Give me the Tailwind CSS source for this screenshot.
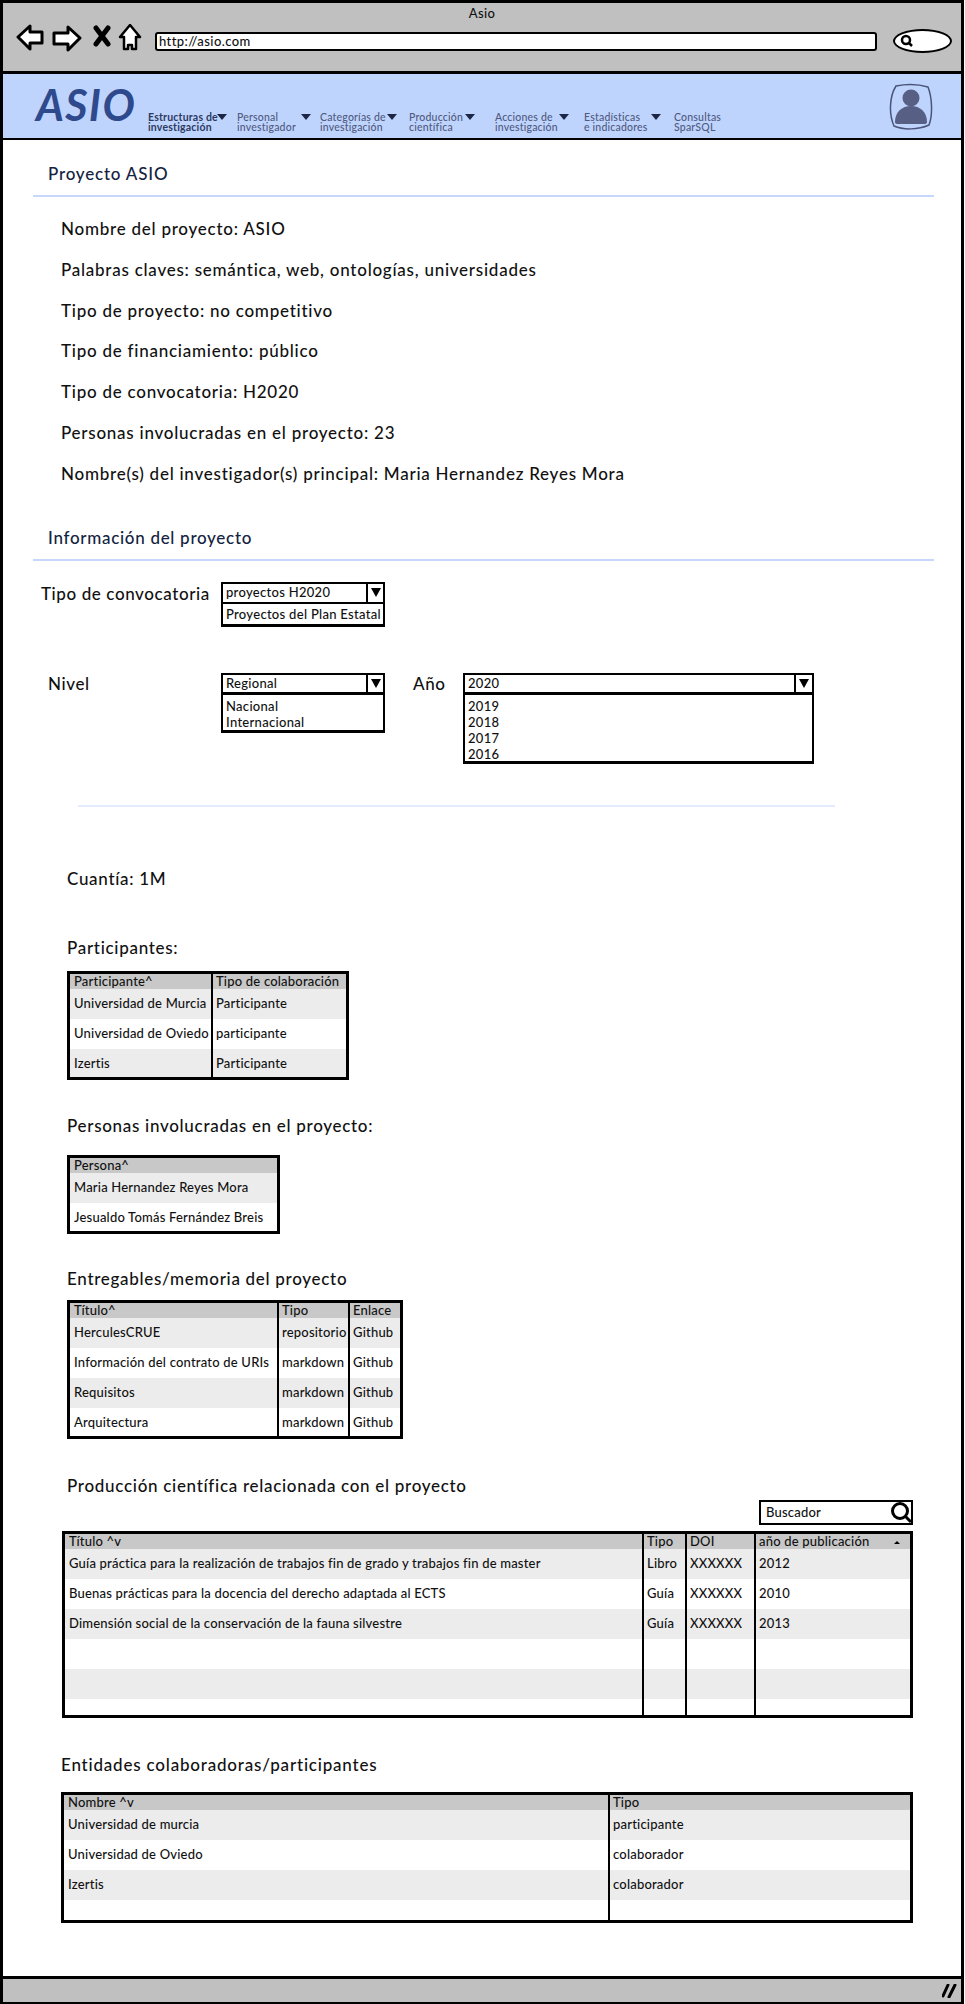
<!DOCTYPE html>
<html lang="es">
<head>
<meta charset="UTF-8" />
<title>Asio</title>
<script src="https://cdn.jsdelivr.net/npm/@tailwindcss/browser@4"></script>
</head>
<body class="bg-white font-['Lato','Liberation_Sans',sans-serif] font-medium text-[#111]">
<div class="w-[964px] h-[2004px] border-x-[3px] border-t-[3px] border-black flex flex-col overflow-hidden box-border">

  <!-- browser toolbar -->
  <header class="h-[68px] shrink-0 bg-[#c0c0c0] border-b-[3px] border-black box-content">
    <p class="text-center text-[13px] leading-4 pt-[2px] tracking-[0.3px]">Asio</p>
    <div class="flex items-start pl-[12px] pt-[3px]">
      <svg width="130" height="30" viewBox="0 0 130 30" class="shrink-0">
        <path d="M3 13 L15 2 L15 8 L27 8 L27 19 L15 19 L15 25 Z" fill="#fff" stroke="#000" stroke-width="3" stroke-linejoin="round"/>
        <path d="M65 14 L53 3 L53 9 L39 9 L39 20 L53 20 L53 26 Z" fill="#fff" stroke="#000" stroke-width="3" stroke-linejoin="round"/>
        <path d="M81 4 L93 20 M93 4 L81 20" stroke="#000" stroke-width="5" stroke-linecap="round"/>
        <path d="M115 1 L125 13 L121 13 L121 25 L117 25 L117 21 L113 21 L113 25 L109 25 L109 13 L105 13 Z" fill="#fff" stroke="#000" stroke-width="2.5" stroke-linejoin="round"/>
      </svg>
      <div class="ml-[10px] w-[722px] h-[19px] mt-[8px] bg-white border-2 border-black rounded-[3px] text-[13px] leading-[15px] pl-[2px] tracking-[0.4px]">http://asio.com</div>
      <div class="ml-[16px] w-[59px] h-[24px] mt-[5px] bg-white border-[2.5px] border-black rounded-[50%] flex items-center pl-[5px]">
        <svg width="14" height="14" viewBox="0 0 14 14"><circle cx="6" cy="6" r="4" fill="none" stroke="#000" stroke-width="2.5"/><path d="M9 9 L12 12" stroke="#000" stroke-width="2.5"/></svg>
      </div>
    </div>
  </header>

  <!-- app nav -->
  <nav class="relative h-[64px] shrink-0 bg-[#bfd4fd] border-b-[2px] border-black box-content flex items-end pl-[33px]">
    <div class="self-start mt-[7px] w-[112px] text-[43px] leading-[48px] font-bold italic text-[#2f4a8c] tracking-[1.5px]">ASIO</div>
    <div class="flex text-[10.5px] leading-[10px] text-[#4f5a80] tracking-[0.2px] pb-[6px] whitespace-nowrap">
      <div class="w-[89px] font-bold text-[#2c3a63] relative">Estructuras de<br>investigación<span class="absolute left-[69px] top-[2px] w-0 h-0 border-x-[5px] border-t-[6px] border-x-transparent border-t-[#1d2645]"></span></div>
      <div class="w-[83px] relative">Personal<br>investigador<span class="absolute left-[64px] top-[2px] w-0 h-0 border-x-[5px] border-t-[6px] border-x-transparent border-t-[#1d2645]"></span></div>
      <div class="w-[89px] relative">Categorías de<br>investigación<span class="absolute left-[67px] top-[2px] w-0 h-0 border-x-[5px] border-t-[6px] border-x-transparent border-t-[#1d2645]"></span></div>
      <div class="w-[86px] relative">Producción<br>científica<span class="absolute left-[56px] top-[2px] w-0 h-0 border-x-[5px] border-t-[6px] border-x-transparent border-t-[#1d2645]"></span></div>
      <div class="w-[89px] relative">Acciones de<br>investigación<span class="absolute left-[64px] top-[2px] w-0 h-0 border-x-[5px] border-t-[6px] border-x-transparent border-t-[#1d2645]"></span></div>
      <div class="w-[90px] relative">Estadísticas<br>e indicadores<span class="absolute left-[67px] top-[2px] w-0 h-0 border-x-[5px] border-t-[6px] border-x-transparent border-t-[#1d2645]"></span></div>
      <div>Consultas<br>SparSQL</div>
    </div>
    <svg width="46" height="48" viewBox="0 0 46 48" class="absolute left-[885px] top-[9px]">
      <path d="M8 3 C18 1 30 1 40 4 C44 14 45 32 41 42 C30 47 15 47 6 43 C1 32 1 14 8 3 Z" fill="none" stroke="#4a5478" stroke-width="1.5"/>
      <circle cx="23" cy="15" r="8.5" fill="#575f85"/>
      <path d="M7 39 C7 29 14 23 23 23 C32 23 39 29 39 39 Q39 41 36 41 L10 41 Q7 41 7 39 Z" fill="#575f85"/>
    </svg>
  </nav>

  <main class="flex-1 flex flex-col min-h-0">
    <h2 class="mt-[22px] ml-[45px] text-[17px] leading-6 font-medium tracking-[0.8px] text-[#14233f]">Proyecto ASIO</h2>
    <div class="mt-[9px] ml-[30px] w-[901px] h-[2px] bg-[#c5d8fb]"></div>

    <div class="mt-[20px] ml-[58px] flex flex-col gap-[16.8px] text-[17px] leading-6 tracking-[0.75px]">
      <p>Nombre del proyecto: ASIO</p>
      <p>Palabras claves: semántica, web, ontologías, universidades</p>
      <p>Tipo de proyecto: no competitivo</p>
      <p>Tipo de financiamiento: público</p>
      <p>Tipo de convocatoria: H2020</p>
      <p>Personas involucradas en el proyecto: 23</p>
      <p>Nombre(s) del investigador(s) principal: Maria Hernandez Reyes Mora</p>
    </div>

    <h2 class="mt-[40px] ml-[45px] text-[17px] leading-6 font-medium tracking-[0.7px] text-[#14233f]">Información del proyecto</h2>
    <div class="mt-[9px] ml-[30px] w-[901px] h-[2px] bg-[#c5d8fb]"></div>

    <!-- selects -->
    <div class="mt-[21px] ml-[38px] flex h-[45px]">
      <span class="w-[180px] text-[17px] leading-6 tracking-[0.6px]">Tipo de convocatoria</span>
      <div class="w-[164px] text-[13px] leading-[17px] tracking-[0.3px]">
        <div class="flex h-[22px] border-2 border-black">
          <span class="flex-1 pl-[3px]">proyectos H2020</span>
          <span class="w-[17px] border-l-2 border-black flex items-center justify-center"><span class="w-0 h-0 border-x-[5px] border-t-[9px] border-x-transparent border-t-black"></span></span>
        </div>
        <div class="h-[23px] border-x-2 border-b-[3px] border-black pl-[3px] pt-[2px] whitespace-nowrap overflow-hidden">Proyectos del Plan Estatal</div>
      </div>
    </div>

    <div class="mt-[46px] flex h-[91px] items-start">
      <span class="ml-[45px] w-[173px] mt-[-1px] text-[17px] leading-6 tracking-[0.6px]">Nivel</span>
      <div class="w-[164px] text-[13px] leading-[16px] tracking-[0.3px]">
        <div class="flex h-[22px] border-2 border-b-[3px] border-black">
          <span class="flex-1 pl-[3px]">Regional</span>
          <span class="w-[17px] border-l-2 border-black flex items-center justify-center"><span class="w-0 h-0 border-x-[5px] border-t-[9px] border-x-transparent border-t-black"></span></span>
        </div>
        <div class="h-[38px] border-x-2 border-b-[3px] border-black pl-[3px] pt-[3px]">Nacional<br>Internacional</div>
      </div>
      <span class="ml-[28px] w-[50px] mt-[-1px] text-[17px] leading-6 tracking-[0.6px]">Año</span>
      <div class="w-[351px] text-[13px] leading-[16px] tracking-[0.3px]">
        <div class="flex h-[22px] border-2 border-b-[3px] border-black">
          <span class="flex-1 pl-[3px]">2020</span>
          <span class="w-[18px] border-l-2 border-black flex items-center justify-center"><span class="w-0 h-0 border-x-[5px] border-t-[9px] border-x-transparent border-t-black"></span></span>
        </div>
        <div class="h-[69px] border-x-2 border-b-[3px] border-black pl-[3px] pt-[3px]">2019<br>2018<br>2017<br>2016</div>
      </div>
    </div>

    <div class="mt-[41px] ml-[75px] w-[757px] h-[2px] bg-[#e3ecfd]"></div>

    <p class="mt-[60px] ml-[64px] text-[17px] leading-6 tracking-[0.7px]">Cuantía: 1M</p>

    <p class="mt-[45px] ml-[64px] text-[17px] leading-6 tracking-[0.7px]">Participantes:</p>
    <div class="mt-[11px] ml-[64px] w-[282px] h-[109px] border-[3px] border-black text-[13px] leading-[15px] tracking-[0.2px] whitespace-nowrap overflow-hidden">
      <table class="w-full table-fixed">
        <colgroup><col class="w-[142px]"><col></colgroup>
        <thead><tr class="h-[15px] bg-[#c8c8c8]"><th class="font-medium text-left pl-1">Participante^</th><th class="font-medium text-left pl-[3px] border-l-2 border-black">Tipo de colaboración</th></tr></thead>
        <tbody>
          <tr class="h-[30px] bg-[#ececec]"><td class="pl-1">Universidad de Murcia</td><td class="pl-[3px] border-l-2 border-black">Participante</td></tr>
          <tr class="h-[30px]"><td class="pl-1">Universidad de Oviedo</td><td class="pl-[3px] border-l-2 border-black">participante</td></tr>
          <tr class="h-[30px] bg-[#ececec]"><td class="pl-1">Izertis</td><td class="pl-[3px] border-l-2 border-black">Participante</td></tr>
        </tbody>
      </table>
    </div>

    <p class="mt-[34px] ml-[64px] text-[17px] leading-6 tracking-[0.7px]">Personas involucradas en el proyecto:</p>
    <div class="mt-[17px] ml-[64px] w-[213px] h-[79px] border-[3px] border-black text-[13px] leading-[15px] tracking-[0.2px] whitespace-nowrap overflow-hidden">
      <table class="w-full table-fixed">
        <thead><tr class="h-[15px] bg-[#c8c8c8]"><th class="font-medium text-left pl-1">Persona^</th></tr></thead>
        <tbody>
          <tr class="h-[30px] bg-[#ececec]"><td class="pl-1">Maria Hernandez Reyes Mora</td></tr>
          <tr class="h-[30px]"><td class="pl-1">Jesualdo Tomás Fernández Breis</td></tr>
        </tbody>
      </table>
    </div>

    <p class="mt-[33px] ml-[64px] text-[17px] leading-6 tracking-[0.7px]">Entregables/memoria del proyecto</p>
    <div class="mt-[9px] ml-[64px] w-[336px] h-[139px] border-[3px] border-black text-[13px] leading-[15px] tracking-[0.2px] whitespace-nowrap overflow-hidden">
      <table class="w-full table-fixed">
        <colgroup><col class="w-[208px]"><col class="w-[71px]"><col></colgroup>
        <thead><tr class="h-[15px] bg-[#c8c8c8]"><th class="font-medium text-left pl-1">Título^</th><th class="font-medium text-left pl-[3px] border-l-2 border-black">Tipo</th><th class="font-medium text-left pl-[3px] border-l-2 border-black">Enlace</th></tr></thead>
        <tbody>
          <tr class="h-[30px] bg-[#ececec]"><td class="pl-1">HerculesCRUE</td><td class="pl-[3px] border-l-2 border-black">repositorio</td><td class="pl-[3px] border-l-2 border-black">Github</td></tr>
          <tr class="h-[30px]"><td class="pl-1">Información del contrato de URIs</td><td class="pl-[3px] border-l-2 border-black">markdown</td><td class="pl-[3px] border-l-2 border-black">Github</td></tr>
          <tr class="h-[30px] bg-[#ececec]"><td class="pl-1">Requisitos</td><td class="pl-[3px] border-l-2 border-black">markdown</td><td class="pl-[3px] border-l-2 border-black">Github</td></tr>
          <tr class="h-[30px]"><td class="pl-1">Arquitectura</td><td class="pl-[3px] border-l-2 border-black">markdown</td><td class="pl-[3px] border-l-2 border-black">Github</td></tr>
        </tbody>
      </table>
    </div>

    <p class="mt-[35px] ml-[64px] text-[17px] leading-6 tracking-[0.7px]">Producción científica relacionada con el proyecto</p>
    <div class="mt-[2px] ml-[756px] w-[154px] h-[25px] border-[2.5px] border-black flex items-center pl-[5px] text-[13px] tracking-[0.2px]">
      <span class="flex-1">Buscador</span>
      <svg width="24" height="22" viewBox="0 0 24 22" class="mr-[-2px]"><circle cx="11" cy="10" r="7.5" fill="none" stroke="#000" stroke-width="3"/><path d="M16 15 L22 21" stroke="#000" stroke-width="3"/></svg>
    </div>
    <div class="mt-[6px] ml-[59px] w-[851px] h-[187px] border-[3px] border-black text-[13px] leading-[15px] tracking-[0.2px] whitespace-nowrap overflow-hidden">
      <table class="w-full table-fixed">
        <colgroup><col class="w-[578px]"><col class="w-[43px]"><col class="w-[69px]"><col></colgroup>
        <thead><tr class="h-[15px] bg-[#c8c8c8]"><th class="font-medium text-left pl-1">Título ^v</th><th class="font-medium text-left pl-[3px] border-l-2 border-black">Tipo</th><th class="font-medium text-left pl-[3px] border-l-2 border-black">DOI</th><th class="font-medium text-left pl-[3px] border-l-2 border-black relative">año de publicación<span class="absolute right-[10px] top-[7px] w-0 h-0 border-x-[3px] border-b-[3px] border-x-transparent border-b-black"></span></th></tr></thead>
        <tbody>
          <tr class="h-[30px] bg-[#ececec]"><td class="pl-1">Guía práctica para la realización de trabajos fin de grado y trabajos fin de master</td><td class="pl-[3px] border-l-2 border-black">Libro</td><td class="pl-[3px] border-l-2 border-black">XXXXXX</td><td class="pl-[3px] border-l-2 border-black">2012</td></tr>
          <tr class="h-[30px]"><td class="pl-1">Buenas prácticas para la docencia del derecho adaptada al ECTS</td><td class="pl-[3px] border-l-2 border-black">Guía</td><td class="pl-[3px] border-l-2 border-black">XXXXXX</td><td class="pl-[3px] border-l-2 border-black">2010</td></tr>
          <tr class="h-[30px] bg-[#ececec]"><td class="pl-1">Dimensión social de la conservación de la fauna silvestre</td><td class="pl-[3px] border-l-2 border-black">Guía</td><td class="pl-[3px] border-l-2 border-black">XXXXXX</td><td class="pl-[3px] border-l-2 border-black">2013</td></tr>
          <tr class="h-[30px]"><td></td><td class="border-l-2 border-black"></td><td class="border-l-2 border-black"></td><td class="border-l-2 border-black"></td></tr>
          <tr class="h-[30px] bg-[#ececec]"><td></td><td class="border-l-2 border-black"></td><td class="border-l-2 border-black"></td><td class="border-l-2 border-black"></td></tr>
          <tr class="h-[30px]"><td></td><td class="border-l-2 border-black"></td><td class="border-l-2 border-black"></td><td class="border-l-2 border-black"></td></tr>
        </tbody>
      </table>
    </div>

    <p class="mt-[35px] ml-[58px] text-[17px] leading-6 tracking-[0.8px]">Entidades colaboradoras/participantes</p>
    <div class="mt-[15px] ml-[58px] w-[852px] h-[131px] border-[3px] border-black text-[13px] leading-[15px] tracking-[0.2px] whitespace-nowrap overflow-hidden">
      <table class="w-full table-fixed">
        <colgroup><col class="w-[545px]"><col></colgroup>
        <thead><tr class="h-[15px] bg-[#c8c8c8]"><th class="font-medium text-left pl-1">Nombre ^v</th><th class="font-medium text-left pl-[3px] border-l-2 border-black">Tipo</th></tr></thead>
        <tbody>
          <tr class="h-[30px] bg-[#ececec]"><td class="pl-1">Universidad de murcia</td><td class="pl-[3px] border-l-2 border-black">participante</td></tr>
          <tr class="h-[30px]"><td class="pl-1">Universidad de Oviedo</td><td class="pl-[3px] border-l-2 border-black">colaborador</td></tr>
          <tr class="h-[30px] bg-[#ececec]"><td class="pl-1">Izertis</td><td class="pl-[3px] border-l-2 border-black">colaborador</td></tr>
          <tr class="h-[30px]"><td></td><td class="border-l-2 border-black"></td></tr>
        </tbody>
      </table>
    </div>

    <!-- status bar -->
    <footer class="mt-auto h-[28px] shrink-0 bg-[#c0c0c0] border-t-[3px] border-b-[2px] border-black flex justify-end items-center pr-[3px]">
      <svg width="16" height="14" viewBox="0 0 16 14"><path d="M6 1 L1 12 M13 1 L7 13" stroke="#000" stroke-width="3" stroke-linecap="round"/></svg>
    </footer>
  </main>
</div>
</body>
</html>
